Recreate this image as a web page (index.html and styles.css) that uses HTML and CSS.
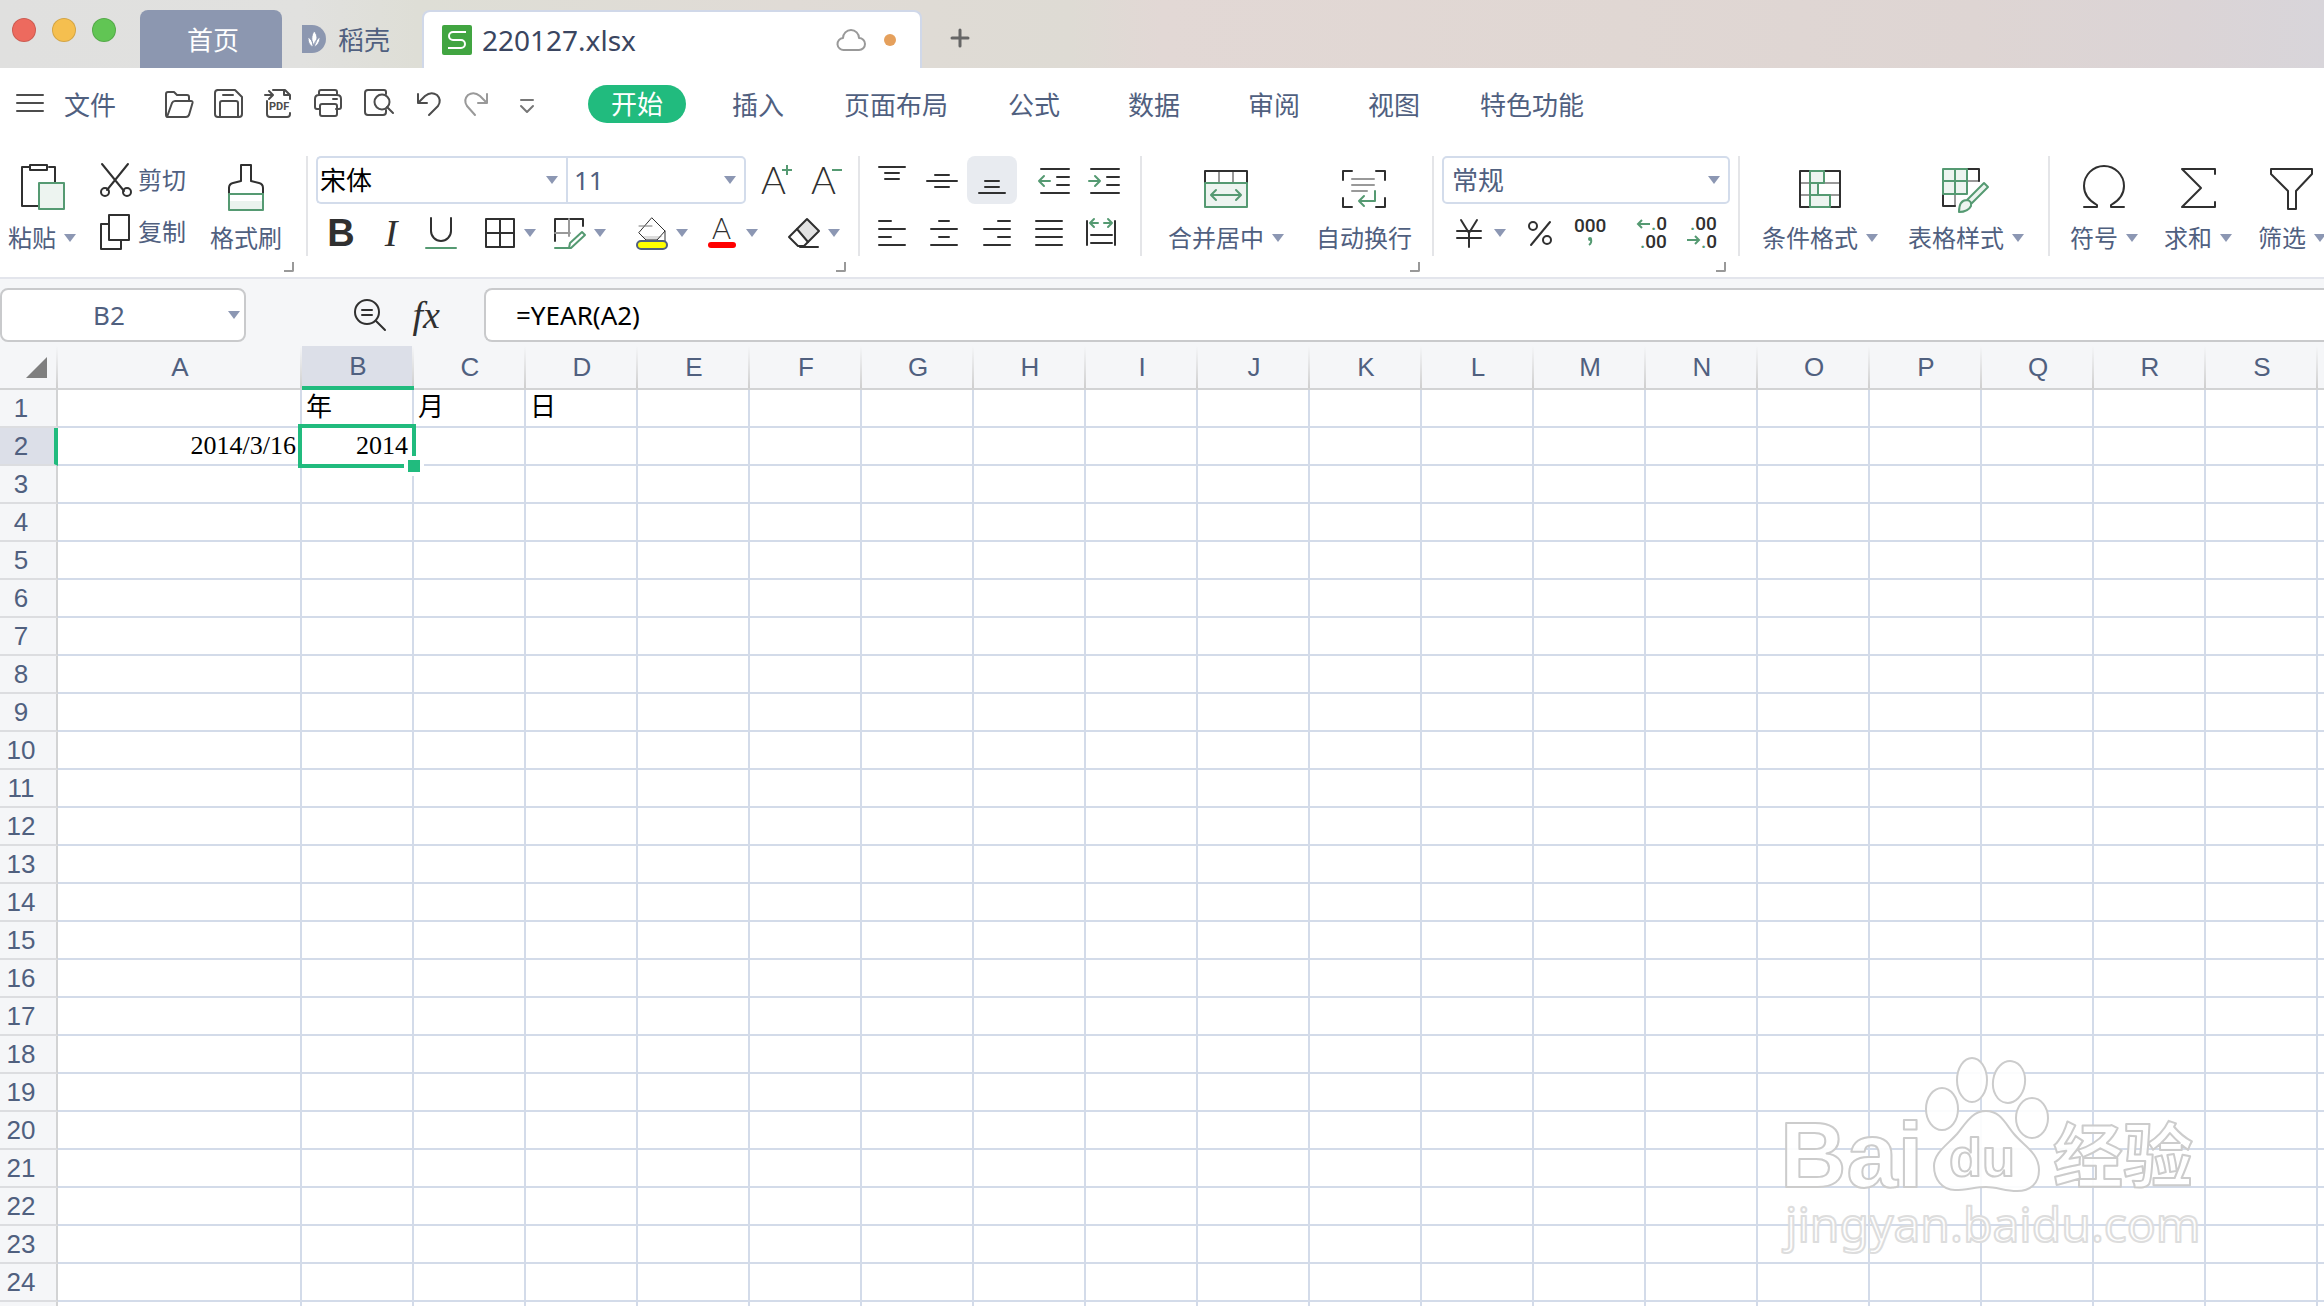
FILE: index.html
```html
<!DOCTYPE html>
<html lang="zh-CN">
<head>
    <meta charset="UTF-8">
    <title>220127.xlsx</title>
    <link rel="stylesheet" href="styles.css">
</head>
<body>
    <header class="titlebar">
        <div class="lights">
            <button class="light red" aria-label="关闭"></button>
            <button class="light yellow" aria-label="最小化"></button>
            <button class="light green" aria-label="全屏"></button>
        </div>
        <button class="tab home">首页</button>
        <button class="tab docer">
            <svg width="24" height="28" viewBox="0 0 24 28"><path d="M0 0h10a14 14 0 0 1 0 28H0z" fill="#8c97b0"/><path d="M12 6c4 4 4 9 0 15c-3-5-3-10 0-15zM6 12c4 3 5 5 5 10c-4-2-5-5-5-10zM18 12c0 5-2 8-6 10c0-5 2-7 6-10z" fill="#fff" stroke="#8c97b0"/></svg>
            稻壳
        </button>
        <div class="tab active">
            <svg width="30" height="30" viewBox="0 0 30 30"><rect width="30" height="30" rx="2" fill="#41a541"/><path d="M24 7H11a4 4 0 0 0 0 8h8a4 4 0 0 1 0 8H6" fill="none" stroke="#fff" stroke-width="2"/></svg>
            <span class="filename">220127.xlsx</span>
            <svg width="30" height="24" viewBox="0 0 30 24" class="line gray"><path d="M8 22a6 6 0 0 1-1-12a8 8 0 0 1 16 0a6 6 0 0 1 0 12z"/></svg>
            <i class="unsaved"></i>
        </div>
        <button class="newtab" aria-label="新建"><svg width="20" height="20" viewBox="0 0 20 20"><path d="M10 2v16M2 10h16" stroke="#666" stroke-width="3" stroke-linecap="round"/></svg></button>
    </header>

    <nav class="menu">
        <button class="file">
            <svg width="28" height="20" viewBox="0 0 28 20" class="line soft"><path d="M1 1h26M1 9h26M1 17h26"/></svg>
            文件
        </button>
        <div class="quick">
            <button aria-label="打开"><svg width="30" height="30" viewBox="0 0 30 30" class="line soft"><path d="M2 26V5q0-2 2-2h6l3 3h10q2 0 2 2v4M3 28L8 14q1-2 3-2h16q2 0 1.500 2L25 26q-1 2-3 2H4q-2 0-2-2"/></svg></button>
            <button aria-label="保存"><svg width="30" height="30" viewBox="0 0 30 30" class="line soft"><path d="M3 1h18l7 7v17q0 3-3 3H4q-3 0-3-3V4q0-3 3-3M9 6h10M6 28V14q0-2 2-2h14q2 0 2 2v14"/></svg></button>
            <button aria-label="输出为PDF"><svg width="30" height="30" viewBox="0 0 30 30" class="line soft"><path d="M1 6h7M5 2l4 4l-4 4M9 1h12l5 5M20 1v5h6v4M3 12v13q0 3 3 3h17q3 0 3-3v-1"/><text x="5" y="21" class="pdf">PDF</text></svg></button>
            <button aria-label="打印"><svg width="30" height="30" viewBox="0 0 30 30" class="line soft"><path d="M5 6V3q0-2 2-2h14q2 0 2 2v3M6 20H3q-2 0-2-2v-8q0-4 4-4h18q4 0 4 4v8q0 2-2 2h-3M19 10h4"/><rect x="6" y="15" width="17" height="12" rx="2"/></svg></button>
            <button aria-label="打印预览"><svg width="30" height="30" viewBox="0 0 30 30" class="line soft"><path d="M22 5V3q0-2-2-2H4Q1 1 1 4v19q0 3 3 3h15q3 0 3-3v-2M23 18l6 6"/><circle cx="18" cy="13" r="7.500"/></svg></button>
            <button aria-label="撤销"><svg width="30" height="26" viewBox="-2 0 30 26" class="line soft"><path d="M2 3v9h9M2 12L9 5q6-5 12-1q5 5 1 11l-9 9"/></svg></button>
            <button aria-label="恢复"><svg width="30" height="26" viewBox="1 0 30 26" class="line faint"><path d="M24 3v9h-9M24 12l-7-7Q11 0 5 4q-5 5-1 11l8 9"/></svg></button>
            <button aria-label="更多"><svg width="30" height="26" viewBox="0 0 30 26" class="line mid"><path d="M7 9h12M7 15l6 6l6-6"/></svg></button>
        </div>
        <div class="menus">
            <button><span class="current">开始</span></button>
            <button>插入</button>
            <button>页面布局</button>
            <button>公式</button>
            <button>数据</button>
            <button>审阅</button>
            <button>视图</button>
            <button>特色功能</button>
        </div>
    </nav>

    <section class="ribbon">
        <div class="group clip">
            <div class="body">
                <button class="big">
                    <svg width="50" height="50" viewBox="0 0 50 50" class="line"><path d="M12 5H5v39h16M32 5h6v18M13 3h17v5H13z"/><rect x="22" y="21" width="25" height="26" class="pale"/></svg>
                    <span>粘贴<i class="arrow"></i></span>
                </button>
                <div class="stack">
                    <button class="small">
                        <svg width="32" height="36" viewBox="0 0 32 36" class="line"><path d="M2 2l22 27M28 2L7 28"/><circle cx="5" cy="30" r="4"/><circle cx="27" cy="30" r="4"/></svg>
                        剪切
                    </button>
                    <button class="small">
                        <svg width="32" height="36" viewBox="0 0 32 36" class="line"><path d="M9 1h20v25H9zM9 10H1v25h20v-9"/></svg>
                        复制
                    </button>
                </div>
                <button class="big">
                    <svg width="50" height="50" viewBox="0 0 50 50" class="line"><path d="M8 31v-5q0-4 4-5l8-2V3h10v16l8 2q4 1 4 5v5"/><rect x="8" y="39" width="34" height="9" fill="#eaf3ee" stroke="none"/><rect x="8" y="32" width="34" height="16" class="g"/></svg>
                    <span>格式刷</span>
                </button>
            </div>
            <button class="launcher" aria-label="剪贴板设置"></button>
        </div>

        <div class="group font">
            <div class="body rows">
                <div class="row">
                    <label class="pick name"><select aria-label="字体"><option>宋体</option></select><i class="arrow"></i></label>
                    <label class="pick size"><select aria-label="字号"><option>11</option></select><i class="arrow"></i></label>
                    <div class="slots resize">
                        <button class="slot" aria-label="增大字号"><svg width="32" height="32" viewBox="0 0 32 32"><text x="0" y="30" class="thin">A</text><path d="M21 6h10M26 1v10" class="gl"/></svg></button>
                        <button class="slot" aria-label="减小字号"><svg width="32" height="32" viewBox="0 0 32 32"><text x="0" y="30" class="thin">A</text><path d="M21 6h10" class="gl"/></svg></button>
                    </div>
                </div>
                <div class="row tools">
                    <div class="slots">
                        <button class="slot bold">B</button>
                        <button class="slot italic">I</button>
                        <button class="slot" aria-label="下划线"><svg width="32" height="32" viewBox="0 0 32 32" class="line"><path d="M6 1v13a10 10 0 0 0 20 0V1"/><path d="M1 31h30" class="g"/></svg></button>
                    </div>
                    <button class="combo" aria-label="边框"><svg width="32" height="32" viewBox="0 0 32 32" class="line"><path d="M2 2h28v28H2zM16 2v28M2 16h28"/></svg><i class="arrow"></i></button>
                    <button class="combo" aria-label="绘制边框"><svg width="32" height="32" viewBox="0 0 32 32" class="line"><path d="M1 24V2h28v7"/><path d="M15 2v17M1 16h15" class="faint"/><path d="M1 31h16l14-13l-3-3l-12 11l-1 5" class="g"/></svg><i class="arrow"></i></button>
                    <button class="combo apart" aria-label="填充颜色"><svg width="32" height="32" viewBox="0 0 32 32" class="line thinline"><path d="M5 19h22l-6 4H10z" fill="#ddd" stroke="none"/><path d="M16 1L29 14L21 23H10L3 16zM29 14v10"/><path d="M3 9h13" class="mid"/><rect x="1" y="24" width="30" height="8" rx="4" class="bucket"/></svg><i class="arrow"></i></button>
                    <button class="combo" aria-label="字体颜色"><svg width="32" height="32" viewBox="0 0 32 32"><text x="6" y="22" class="thin a2">A</text><rect x="2" y="25" width="28" height="6" rx="3" fill="#f00"/></svg><i class="arrow"></i></button>
                    <button class="combo apart" aria-label="清除"><svg width="32" height="32" viewBox="0 0 32 32" class="line"><path d="M19 2L31 14L20 25L9 12z" fill="#e3e3e3"/><path d="M9 12L1 20L10 29H16L20 25M12 30h18"/></svg><i class="arrow"></i></button>
                </div>
            </div>
            <button class="launcher" aria-label="字体设置"></button>
        </div>

        <div class="group align">
            <div class="body rows">
                <div class="row">
                    <button class="slot" aria-label="顶端对齐"><svg width="32" height="32" viewBox="0 0 32 32" class="line"><path d="M3 3h26M9 9h14M9 15h14"/></svg></button>
                    <button class="slot" aria-label="垂直居中"><svg width="32" height="32" viewBox="0 0 32 32" class="line"><path d="M9 11h14M1 17h30M9 23h14"/></svg></button>
                    <button class="slot on" aria-label="底端对齐"><svg width="32" height="32" viewBox="0 0 32 32" class="line"><path d="M9 17h14M9 23h14M3 29h26"/></svg></button>
                    <button class="slot apart" aria-label="减少缩进"><svg width="32" height="32" viewBox="0 0 32 32" class="line"><path d="M3 5h28M19 13h12M19 21h12M3 29h28"/><path d="M12 17H1M6 12l-5 5l5 5" class="g"/></svg></button>
                    <button class="slot" aria-label="增加缩进"><svg width="32" height="32" viewBox="0 0 32 32" class="line"><path d="M3 5h28M19 13h12M19 21h12M3 29h28"/><path d="M1 17h11M7 12l5 5l-5 5" class="g"/></svg></button>
                </div>
                <div class="row wide">
                    <button class="slot" aria-label="左对齐"><svg width="32" height="32" viewBox="0 0 32 32" class="line"><path d="M2 4h12M2 12h26M2 20h12M2 28h26"/></svg></button>
                    <button class="slot" aria-label="居中"><svg width="32" height="32" viewBox="0 0 32 32" class="line"><path d="M10 4h10M2 12h26M10 20h10M2 28h26"/></svg></button>
                    <button class="slot" aria-label="右对齐"><svg width="32" height="32" viewBox="0 0 32 32" class="line"><path d="M17 4h12M3 12h26M17 20h12M3 28h26"/></svg></button>
                    <button class="slot" aria-label="两端对齐"><svg width="32" height="32" viewBox="0 0 32 32" class="line"><path d="M3 4h26M3 12h26M3 20h26M3 28h26"/></svg></button>
                    <button class="slot" aria-label="分散对齐"><svg width="32" height="32" viewBox="0 0 32 32" class="line"><path d="M2 4v24M30 4v24M6 18h21M6 26h21"/><path d="M13 6H5M9 2L5 6l4 4M19 6h8M23 2l4 4l-4 4" class="g"/></svg></button>
                </div>
            </div>
        </div>

        <div class="group merge">
            <div class="body">
                <button class="big">
                    <svg width="50" height="50" viewBox="0 0 50 50" class="line"><path d="M18 10v10M32 10v10" class="faint"/><path d="M4 21V9h42v12"/><rect x="4" y="21" width="42" height="24" class="pale"/><path d="M11 33h28M15 28l-5 5l5 5M35 28l5 5l-5 5" class="g"/></svg>
                    <span>合并居中<i class="arrow"></i></span>
                </button>
                <button class="big">
                    <svg width="50" height="50" viewBox="0 0 50 50" class="line"><path d="M4 18V9h9M37 9h9v9M4 36v9h9M37 45h9v-9"/><path d="M13 17h22M13 23h22M13 29h15" class="faint"/><path d="M36 29v10H20M25 34l-5 5l5 5" class="g"/></svg>
                    <span>自动换行</span>
                </button>
            </div>
            <button class="launcher" aria-label="对齐设置"></button>
        </div>

        <div class="group number">
            <div class="body rows">
                <div class="row">
                    <label class="pick format"><select aria-label="数字格式"><option>常规</option></select><i class="arrow"></i></label>
                </div>
                <div class="row tools">
                    <button class="combo" aria-label="货币"><svg width="32" height="32" viewBox="0 0 32 32" class="line"><path d="M7 3l8 13l8-13M3 14h24M3 21h24M15 16v14"/></svg><i class="arrow"></i></button>
                    <button aria-label="百分比"><svg width="32" height="32" viewBox="0 0 32 32" class="line"><circle cx="9" cy="9" r="4"/><circle cx="23" cy="23" r="4"/><path d="M26 5L7 28"/></svg></button>
                    <button aria-label="千位分隔"><svg width="32" height="32" viewBox="0 0 32 32"><text x="0" y="15" class="num">000</text><circle cx="16" cy="22" r="2" fill="#559a72"/><path d="M17 22q1 4-2 6" class="gl"/></svg></button>
                    <button class="apart" aria-label="增加小数位"><svg width="32" height="32" viewBox="0 0 32 32"><path d="M14 7H2M6 3L2 7l4 4" class="gl"/><text x="15" y="13" class="num"><tspan fill="#559a72">.</tspan>0</text><text x="4" y="31" class="num"><tspan fill="#559a72">.</tspan>00</text></svg></button>
                    <button aria-label="减少小数位"><svg width="32" height="32" viewBox="0 0 32 32"><path d="M1 23h12M9 19l4 4l-4 4" class="gl"/><text x="4" y="13" class="num"><tspan fill="#559a72">.</tspan>00</text><text x="15" y="31" class="num"><tspan fill="#559a72">.</tspan>0</text></svg></button>
                </div>
            </div>
            <button class="launcher" aria-label="数字设置"></button>
        </div>

        <div class="group styles">
            <div class="body">
                <button class="big">
                    <svg width="50" height="50" viewBox="0 0 50 50" class="line"><path d="M5 21h40M5 33h40" class="faint"/><path d="M5 9h40v36H5z"/><path d="M15 9h14v12H15zM15 21h8v12h-8zM15 33h20v12H15z" class="pale"/></svg>
                    <span>条件格式<i class="arrow"></i></span>
                </button>
                <button class="big">
                    <svg width="50" height="50" viewBox="0 0 50 50" class="line"><path d="M26 19h12M14 32v12" class="faint"/><path d="M26 7h12v12M2 32v12h12"/><path d="M2 7h24v25H2zM14 7v25M2 19h24" class="pale"/><path d="M26 38L43 21l4 4l-17 17M18 50q0-12 8-12q5 1 4 6q-3 6-12 6" class="pale"/></svg>
                    <span>表格样式<i class="arrow"></i></span>
                </button>
            </div>
        </div>

        <div class="group edit">
            <div class="body">
                <button class="big">
                    <svg width="50" height="50" viewBox="0 0 50 50" class="line"><path d="M5 45h13v-2C9 38 5 31 5 24a19 19 0 0 1 40 0c0 7-4 14-13 19v2h13"/></svg>
                    <span>符号<i class="arrow"></i></span>
                </button>
                <button class="big">
                    <svg width="50" height="50" viewBox="0 0 50 50" class="line"><path d="M42 12V7H9l19 19L9 45h33v-5"/></svg>
                    <span>求和<i class="arrow"></i></span>
                </button>
                <button class="big">
                    <svg width="50" height="50" viewBox="0 0 50 50" class="line"><path d="M4 7h41v5L29 29v18h-8V29L4 12z"/></svg>
                    <span>筛选<i class="arrow"></i></span>
                </button>
            </div>
        </div>
    </section>

    <section class="formulabar">
        <label class="namebox"><input type="text" value="B2" aria-label="名称框"><i class="arrow"></i></label>
        <div class="fxtools">
            <button aria-label="浏览公式结果"><svg width="34" height="34" viewBox="0 0 34 34" class="line"><circle cx="14" cy="14" r="12"/><path d="M23 23l9 9M9 12h10M9 17h10"/></svg></button>
            <button class="fx">fx</button>
        </div>
        <input class="formula" type="text" value="=YEAR(A2)" aria-label="编辑栏">
    </section>

    <main class="sheet">
        <table id="grid"></table>
        <div class="watermark">
            <svg width="430" height="220" viewBox="0 0 430 220">
                <g class="mark">
                    <text x="5" y="137" class="bai">Bai</text>
                    <ellipse cx="167" cy="59" rx="16" ry="21"/>
                    <ellipse cx="197" cy="30" rx="15" ry="22"/>
                    <ellipse cx="234" cy="32" rx="16" ry="21" transform="rotate(8 234 32)"/>
                    <ellipse cx="257" cy="68" rx="16" ry="20"/>
                    <path d="M211 61C225 61 230 73 239 84C249 96 264 103 264 120C264 134 255 141 242 141C230 141 222 137 211 137C200 137 192 140 180 140C167 140 159 129 159 116C159 103 172 95 182 84C191 73 197 61 211 61z"/>
                    <text x="174" y="126" class="du">du</text>
                    <text x="278" y="132" class="jy">经验</text>
                    <text x="10" y="192" class="site">jingyan.baidu.com</text>
                </g>
            </svg>
        </div>
    </main>

    <script>
        const grid = document.getElementById('grid')
        const cols = 'ABCDEFGHIJKLMNOPQRST'.split('')
        const data = { B1: '年', C1: '月', D1: '日', A2: '2014/3/16', B2: '2014' }
        const selected = { col: 'B', row: 2 }

        let html = '<colgroup><col class="c-head">'
        for (const c of cols) html += `<col class="${c === 'A' ? 'c-wide' : 'c-cell'}">`
        html += '</colgroup><thead><tr><th class="corner"></th>'
        for (const c of cols) html += `<th${c === selected.col ? ' class="sel"' : ''}>${c}</th>`
        html += '</tr></thead><tbody>'

        for (let r = 1; r <= 25; r++) {
            html += `<tr><th${r === selected.row ? ' class="sel"' : ''}>${r}</th>`
            for (const c of cols) {
                const value = data[c + r] || ''
                if (c === selected.col && r === selected.row) {
                    html += `<td class="num-cell picked">${value}<div class="selection"><i class="handle"></i></div></td>`
                } else {
                    html += `<td${/^\d/.test(value) ? ' class="num-cell"' : ''}>${value}</td>`
                }
            }
            html += '</tr>'
        }
        grid.innerHTML = html + '</tbody>'
    </script>
</body>
</html>
```

FILE: styles.css
```css
* { box-sizing: border-box; }
body {
    margin: 0;
    height: 100vh;
    display: flex;
    flex-direction: column;
    overflow: hidden;
    background: #fff;
    color: #50607f;
    font-family: "Noto Sans", "Noto Sans CJK SC", sans-serif;
    font-size: 26px;
}
button, input, select {
    font: inherit;
    color: inherit;
    border: none;
    background: none;
    padding: 0;
    margin: 0;
}
button {
    display: flex;
    align-items: center;
    justify-content: center;
    white-space: nowrap;
    flex-shrink: 0;
}
svg { display: block; flex-shrink: 0; overflow: visible; }

/* icon strokes */
.line { fill: none; stroke: #303030; stroke-width: 2; stroke-linecap: round; stroke-linejoin: round; }
.soft { stroke: #4c4c4c; }
.mid { stroke: #777; }
.gray, .faint { stroke: #999; }
.faint { fill: none; }
.g, .gl { fill: none; stroke: #559a72; stroke-width: 2; }
.pale { fill: #edf4f0; stroke: #559a72; }
.thinline { stroke-width: 1; }
.bucket { fill: #ff0; stroke: #50607f; stroke-width: 2; }
.pdf { font: bold 11px Roboto, sans-serif; fill: #4c4c4c; stroke: none; }
.thin { font: 300 38px Lato, sans-serif; fill: #303030; }
.a2 { font-size: 29px; }
.num { font: 500 19px Roboto, sans-serif; fill: #303030; }
.arrow {
    border: 6px solid transparent;
    border-top: 8px solid #8c97b3;
    border-bottom: none;
    flex-shrink: 0;
}

/* title bar */
.titlebar {
    height: 68px;
    flex-shrink: 0;
    display: flex;
    align-items: flex-end;
    background: linear-gradient(90deg, #e0e0df 0%, #e1e1df 13%, #deded6 18%, #e0dbd6 34%, #dedbd4 46%, #e2d8d5 50%, #e0d7d3 70%, #ded5d3 85%, #dbd4d6 94%, #d8d5da 100%);
}
.lights { display: flex; gap: 16px; padding: 0 24px 26px 12px; }
.light { width: 24px; height: 24px; border-radius: 50%; border: 1px solid #00000022; }
.red { background: #ed6a5e; }
.yellow { background: #f5bf4f; }
.green { background: #61c554; }
.tab { height: 58px; border-radius: 8px 8px 0 0; }
.home { width: 142px; padding-left: 4px; background: #8c97b0; color: #fff; }
.docer { width: 140px; justify-content: flex-start; gap: 12px; padding-left: 20px; }
.active {
    width: 500px;
    display: flex;
    align-items: center;
    padding: 0 24px 0 18px;
    background: #fff;
    border: 2px solid #d0d8e9;
    border-bottom: none;
}
.filename { flex: 1; padding-left: 10px; font-size: 28px; color: #3a4560; }
.unsaved { width: 12px; height: 12px; margin-left: 18px; border-radius: 50%; background: #e5a05c; }
.newtab { height: 60px; padding-left: 28px; }

/* menu */
.menu { height: 72px; flex-shrink: 0; display: flex; align-items: center; padding-left: 16px; }
.file { gap: 20px; width: 148px; justify-content: flex-start; }
.quick { display: flex; gap: 20px; width: 412px; }
.menus { display: flex; }
.menus button { min-width: 120px; padding: 0 26px; }
.current {
    margin: 0 -14px;
    padding: 0 23px;
    line-height: 38px;
    border-radius: 19px;
    background: #21bb7e;
    color: #fff;
}

/* ribbon */
.ribbon {
    height: 139px;
    flex-shrink: 0;
    display: flex;
    padding-top: 16px;
    overflow: hidden;
    border-bottom: 2px solid #e3e5ec;
    font-size: 24px;
}
.group { flex-shrink: 0; display: flex; flex-direction: column; }
.body { display: flex; height: 100px; border-right: 2px solid #e4e5e8; }
.edit .body { border-right: none; }
.launcher {
    width: 10px;
    height: 10px;
    align-self: flex-end;
    margin: 6px 14px 0 0;
    border: solid #999;
    border-width: 0 2px 2px 0;
    border-radius: 0 0 2px 0;
}
.big { flex-direction: column; justify-content: flex-start; gap: 10px; padding-top: 6px; }
.big span { display: flex; align-items: center; gap: 8px; line-height: 32px; }
.stack { display: flex; flex-direction: column; gap: 16px; padding-top: 6px; }
.small { gap: 6px; line-height: 36px; }
.rows { flex-direction: column; gap: 6px; }
.row { display: flex; align-items: center; height: 48px; }
.row + .row { height: 46px; }
.tools { gap: 18px; }
.slots { display: flex; }
.slot { width: 50px; height: 48px; }
.resize { padding-left: 6px; }
.wide .slot { width: 52px; }
.combo { gap: 8px; }
.apart { margin-left: 12px; }
.on { background: #e8ebf0; border-radius: 8px; }
.bold { font: bold 38px "Liberation Sans", sans-serif; color: #303030; }
.italic { font: italic 38px "Liberation Serif", serif; color: #303030; }

.clip .body { gap: 24px; padding: 0 24px 0 8px; }
.font .body { padding: 0 6px 0 8px; }
.align .body { padding: 0 11px 0 7px; }
.merge .body { gap: 32px; padding: 0 20px 0 26px; }
.number .body { padding: 0 8px; }
.number .tools { padding-left: 12px; }
.styles .body { gap: 30px; padding: 0 24px 0 22px; }
.edit .body { gap: 26px; padding-left: 20px; }

.pick { display: flex; align-items: center; height: 48px; border: 2px solid #d3dceb; border-radius: 5px; padding-right: 8px; font-size: 26px; }
.pick select { flex: 1; height: 44px; appearance: none; outline: none; }
.pick .arrow { pointer-events: none; }
.name { width: 250px; border-right: none; border-radius: 5px 0 0 5px; color: #000; }
.name select { padding-left: 2px; }
.size { width: 180px; border-radius: 0 5px 5px 0; }
.size select { padding-left: 6px; }
.format { width: 288px; }
.format select { padding-left: 8px; }

/* formula bar */
.formulabar { height: 67px; flex-shrink: 0; display: flex; align-items: flex-start; padding-top: 9px; background: #f5f6f8; }
.namebox, .formula { height: 54px; background: #fff; border: 2px solid #c9cacc; border-radius: 8px; }
.namebox { display: flex; align-items: center; width: 246px; padding-right: 4px; }
.namebox input { flex: 1; min-width: 0; padding-right: 12px; text-align: center; }
.fxtools { display: flex; justify-content: flex-end; align-items: center; gap: 26px; width: 238px; height: 54px; padding-right: 44px; }
.fx { font: italic 38px "Liberation Serif", serif; color: #303030; }
.formula { flex: 1; border-right: none; border-radius: 8px 0 0 8px; padding-left: 30px; color: #000; }

/* sheet */
.sheet { flex: 1; position: relative; overflow: hidden; }
table { table-layout: fixed; border-collapse: separate; border-spacing: 0; width: 2430px; }
.c-head { width: 58px; }
.c-wide { width: 244px; }
.c-cell { width: 112px; }
th {
    height: 38px;
    padding: 0 14px 0 0;
    background: #f5f6f8;
    border-right: 2px solid #d2d3d4;
    border-bottom: 2px solid #dcdde0;
    font: 26px/34px "Liberation Sans", sans-serif;
    color: #50607f;
}
thead th {
    height: 44px;
    padding: 0;
    border-right: none;
    border-bottom: 2px solid #d2d3d4;
    background: linear-gradient(#f5f6f8, #cfcfcf) right / 2px 100% no-repeat #f5f6f8;
}
th.sel { background-color: #dcdfe8; }
thead th.sel { border-bottom: 4px solid #21bb7e; }
tbody th.sel { border-right: 4px solid #21bb7e; padding-right: 12px; }
.corner::after {
    content: "";
    display: block;
    margin-left: 26px;
    width: 0;
    border-left: 21px solid transparent;
    border-bottom: 21px solid #7f7f7f;
}
td {
    height: 38px;
    padding: 0 4px;
    border-right: 2px solid #d3dbe9;
    border-bottom: 2px solid #d3dbe9;
    font: 26px/34px "Liberation Serif", "Noto Sans CJK SC", serif;
    color: #000;
    white-space: nowrap;
}
.num-cell { text-align: right; }
.picked { position: relative; }
.selection { position: absolute; inset: -4px; border: 4px solid #21bb7e; }
.handle { position: absolute; right: -8px; bottom: -8px; width: 12px; height: 12px; background: #21bb7e; outline: 4px solid #fff; }

.watermark { position: absolute; right: 119px; bottom: 36px; pointer-events: none; }
.mark { fill: #fff; fill-opacity: .9; stroke: #ccc; stroke-width: 2; stroke-linejoin: round; }
.bai { font: bold 92px "Liberation Sans", sans-serif; }
.du { font: bold 54px "Liberation Sans", sans-serif; }
.jy { font: bold 70px "Noto Sans CJK SC", sans-serif; }
.site { font: 48px "Noto Sans", sans-serif; stroke: #ddd; }
```
